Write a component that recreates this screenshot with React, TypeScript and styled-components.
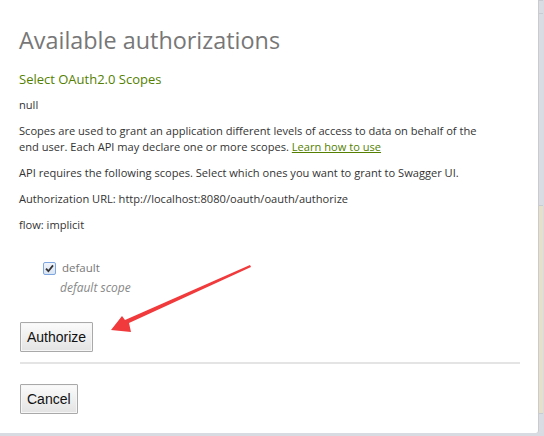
import React from "react";
import styled, { createGlobalStyle } from "styled-components";

const Global = createGlobalStyle`
  html, body { margin: 0; padding: 0; background: #d8dbe1; }
  body { width: 544px; height: 436px; overflow: hidden; }
`;

const Page = styled.div`
  display: flex;
  width: 544px;
  height: 436px;
  background: #d8dbe1;
`;

const Modal = styled.div`
  position: relative;
  width: 539px;
  height: 433px;
  background: #fff;
  border-right: 1px solid #c9cbcf;
  border-bottom-right-radius: 3px;
  box-sizing: border-box;
  padding: 23px 19px 0 19px;
  font-family: "Open Sans", "Noto Sans", sans-serif;
  color: #333;
`;

const Side = styled.div`
  display: flex;
  flex-direction: column;
  width: 4px;
  height: 433px;
`;

const SideBlock = styled.div<{ $h: number; $c: string }>`
  height: ${(p) => p.$h}px;
  background: ${(p) => p.$c};
  border-top: 1px solid #c8ccd2;
  box-sizing: border-box;
`;

const Title = styled.h3`
  margin: 0 0 12px 0;
  font-size: 23.4px;
  font-weight: 400;
  color: #777;
  line-height: 34px;
`;

const Subtitle = styled.h4`
  margin: 0 0 8px 0;
  font-size: 13px;
  font-weight: 400;
  color: #547f00;
  line-height: 20px;
`;

const P = styled.p`
  margin: 0 0 10px 0;
  max-width: 478px;
  font-size: 11.1px;
  line-height: 16px;
`;

const Link = styled.a`
  color: #547f00;
  text-decoration: underline;
`;

const Scopes = styled.ul`
  list-style: none;
  margin: 26px 0 0 24px;
  padding: 0;
`;

const ScopeRow = styled.li`
  display: grid;
  grid-template-columns: 19px auto;
  row-gap: 2px;
  align-items: center;
`;

const Check = styled.span`
  width: 11px;
  height: 11px;
  border: 1px solid #7ea6e0;
  border-radius: 2px;
  background: linear-gradient(#f0f4fa, #d9e4f3);
  display: flex;
  align-items: center;
  justify-content: center;
`;

const ScopeName = styled.span`
  font-size: 11.5px;
  color: #777;
  line-height: 18px;
`;

const ScopeDesc = styled.span`
  grid-column: 2;
  margin-left: -2px;
  font-size: 12px;
  font-style: italic;
  color: #888;
  line-height: 18px;
`;

const Actions = styled.div<{ $top: number }>`
  margin: ${(p) => p.$top}px 0 0 1px;
`;

const Button = styled.button`
  height: 30px;
  padding: 0 6px;
  font-family: "Liberation Sans", Arial, sans-serif;
  font-size: 14px;
  color: #111;
  background: linear-gradient(#fbfbfb, #e3e3e3);
  border: 1px solid #a9a9a9;
  border-radius: 1px;
  box-shadow: inset 0 0 0 1px #f6f6f6;
`;

const Rule = styled.hr`
  margin: 10px 0 20px 1px;
  width: 500px;
  border: none;
  height: 2px;
  background: #e4e4e4;
`;

const Arrow = styled.svg`
  position: absolute;
  left: 0;
  top: 0;
  pointer-events: none;
`;

export default function App() {
  return (
    <>
      <Global />
      <Page>
        <Modal>
          <Title>Available authorizations</Title>
          <Subtitle>Select OAuth2.0 Scopes</Subtitle>
          <P>null</P>
          <P>
            Scopes are used to grant an application different levels of access to data on behalf of the end user.
            Each API may declare one or more scopes. <Link>Learn how to use</Link>
          </P>
          <P>API requires the following scopes. Select which ones you want to grant to Swagger UI.</P>
          <P>Authorization URL: http://localhost:8080/oauth/oauth/authorize</P>
          <P>flow: implicit</P>
          <Scopes>
            <ScopeRow>
              <Check>
                <svg width="9" height="9" viewBox="0 0 9 9">
                  <path d="M1 4.6 L3.4 7.2 L8 1.4" fill="none" stroke="#333" strokeWidth="1.8" />
                </svg>
              </Check>
              <ScopeName>default</ScopeName>
              <ScopeDesc>default scope</ScopeDesc>
            </ScopeRow>
          </Scopes>
          <Actions $top={25}>
            <Button>Authorize</Button>
          </Actions>
          <Rule />
          <Actions $top={0}>
            <Button>Cancel</Button>
          </Actions>
          <Arrow width="540" height="433" viewBox="0 0 540 433">
            <polygon
              points="250,265 251,267 129,323 131,332 111,330 122,316 125,320"
              fill="#f03a3c"
            />
          </Arrow>
        </Modal>
        <Side>
          <SideBlock $h={13} $c="#d9dce2" />
          <SideBlock $h={192} $c="#d9dce2" />
          <SideBlock $h={208} $c="#e6e0c9" />
          <SideBlock $h={20} $c="#d9dce2" />
        </Side>
      </Page>
    </>
  );
}
